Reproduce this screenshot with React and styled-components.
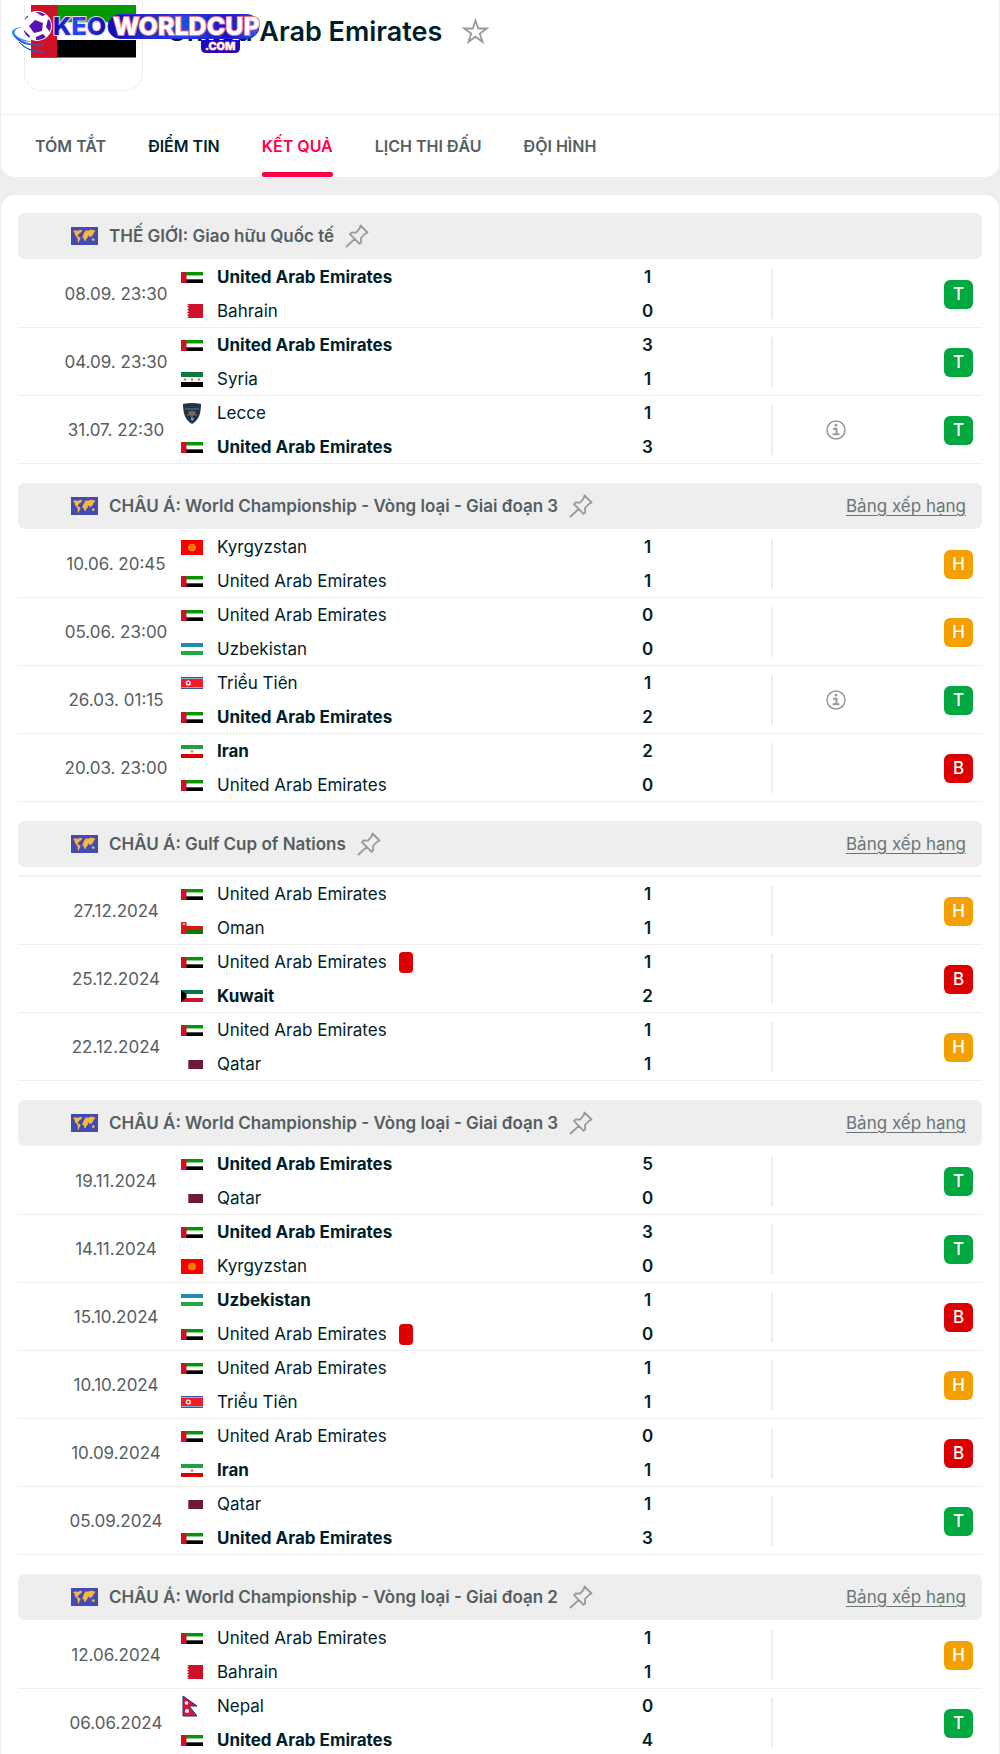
import React from 'react';
import styled, { createGlobalStyle } from 'styled-components';

const GlobalStyle = createGlobalStyle`
  * {
    box-sizing: border-box;
  }

  body {
    margin: 0;
    background-color: #eeeeee;
    color: #001e28;
    font-family: Inter, 'Noto Sans', sans-serif;
    font-size: 17px;
  }
`;

const Page = styled.div`
  position: relative;
  padding: 0 1px;
`;

const HeaderCard = styled.header`
  background-color: white;
  border-radius: 0 0 14px 14px;
`;

const Heading = styled.div`
  display: flex;
  align-items: flex-start;
  height: 115px;
  padding-left: 23px;
  border-bottom: 1px solid #eeeeee;
`;

const LogoBox = styled.div`
  display: flex;
  align-items: flex-start;
  justify-content: center;
  width: 119px;
  height: 91px;
  padding-top: 5px;
  border: 1px solid #eeeeee;
  border-top: none;
  border-radius: 0 0 18px 18px;
`;

const TeamName = styled.h1`
  margin: 15px 0 0 24px;
  font-size: 27px;
  font-weight: 600;
  line-height: 34px;
`;

const IconButton = styled.button`
  display: flex;
  padding: 0;
  border: none;
  background: none;
  color: #999999;
  cursor: pointer;
`;

const StarButton = styled(IconButton)`
  margin: 18px 0 0 20px;
`;

const Tabs = styled.nav`
  display: flex;
  gap: 42px;
  padding-left: 34px;
`;

const Tab = styled.a`
  display: flex;
  flex-direction: column;
  justify-content: space-between;
  height: 62px;
  color: ${props => (props.$active ? '#ff0046' : props.$strong ? '#001e28' : '#555e61')};
  font-size: 16px;
  font-weight: 600;
  line-height: 20px;
  text-decoration: none;
  text-transform: uppercase;

  &::before {
    content: '';
    height: 5px;
  }

  &::after {
    content: '';
    height: 5px;
    background-color: ${props => (props.$active ? '#ff0046' : 'transparent')};
    border-radius: 2px;
  }
`;

const ResultsCard = styled.main`
  display: flex;
  flex-direction: column;
  gap: 19px;
  margin-top: 18px;
  padding: 18px 17px 0;
  background-color: white;
  border-radius: 14px 14px 0 0;
`;

const GroupHeader = styled.div`
  display: flex;
  align-items: center;
  height: 46px;
  margin-bottom: ${props => (props.$spaced ? 8 : 1)}px;
  padding: 0 16px 0 53px;
  background-color: #eeeeee;
  border-radius: 7px;
`;

const GroupTitle = styled.h2`
  margin: 0 11px;
  color: #555e61;
  font-size: 17px;
  font-weight: 600;
`;

const StandingsLink = styled.a`
  margin-left: auto;
  color: #6b7578;
  text-underline-offset: 3px;
`;

const MatchTable = styled.table`
  width: 100%;
  border-collapse: collapse;
  table-layout: fixed;
  border-top: ${props => (props.$ruled ? '2px solid #f2f2f2' : 'none')};
`;

const MatchRow = styled.tr`
  height: 68px;
  box-shadow: inset 0 -1px #eeeeee;
`;

const Cell = styled.td`
  padding: 0;
`;

const DateCell = styled(Cell)`
  width: 163px;
  padding-left: 33px;
  color: #555e61;
  text-align: center;
`;

const ScoreCell = styled(Cell)`
  width: 247px;
  font-weight: 600;
  line-height: 34px;
  text-align: center;
`;

const InfoCell = styled(Cell)`
  width: 130px;
`;

const InfoBox = styled.div`
  display: flex;
  align-items: center;
  justify-content: center;
  height: 50px;
  padding-right: 2px;
  border-left: 2px solid #eeeeee;
`;

const ResultCell = styled(Cell)`
  width: 81px;
  padding-right: 9px;
`;

const TeamLine = styled.div`
  display: flex;
  align-items: center;
  height: 34px;
  font-weight: ${props => (props.$winner ? 700 : 400)};
`;

const FlagSlot = styled.span`
  display: flex;
  width: 22px;
  margin-right: 14px;
`;

const RedCard = styled.span`
  width: 14px;
  height: 21px;
  margin-left: 12px;
  background-color: #dc0000;
  border-radius: 4px;
`;

const badgeColors = { T: '#00a83f', H: '#f3a000', B: '#dc0000' };

const ResultBadge = styled.span`
  display: flex;
  align-items: center;
  justify-content: center;
  width: 29px;
  height: 29px;
  margin-left: auto;
  background-color: ${props => badgeColors[props.$result]};
  border-radius: 6px;
  color: white;
  font-weight: 500;
`;

const Watermark = styled.svg`
  position: absolute;
  top: 8px;
  left: 10px;
`;

const flags = {
  uae: {
    height: 11,
    art: (
      <>
        <rect width="22" height="3.67" fill="#009a00" />
        <rect y="3.67" width="22" height="3.67" fill="#fff" />
        <rect y="7.33" width="22" height="3.67" fill="#000" />
        <rect width="5.5" height="11" fill="#ce1126" />
      </>
    ),
  },
  bahrain: {
    height: 14,
    art: <path d="M22 0H6l2 1.4-2 1.4 2 1.4-2 1.4L8 7 6 8.4l2 1.4-2 1.4 2 1.4L6 14h16z" fill="#ce1126" />,
  },
  syria: {
    height: 15,
    art: (
      <>
        <rect width="22" height="5" fill="#0b7a3c" />
        <rect y="10" width="22" height="5" fill="#000" />
        <circle cx="4" cy="7.5" r="1.2" fill="#dd6673" />
        <circle cx="11" cy="7.5" r="1.2" fill="#dd6673" />
        <circle cx="18" cy="7.5" r="1.2" fill="#dd6673" />
      </>
    ),
  },
  lecce: {
    height: 21,
    art: (
      <>
        <path d="M2 1q9-2 18 0c0 9-2 16-9 20C4 17 2 10 2 1z" fill="#233344" />
        <path d="M4 6h14M6 13l5-4 5 4" fill="none" stroke="#697887" strokeWidth="1" />
        <path d="M8 8h6l1 3-4 3-4-3z" fill="#75665c" />
        <path d="M10 14l3 1-1 3-2-1z" fill="#8795a3" />
      </>
    ),
  },
  kyrgyzstan: {
    height: 15,
    art: (
      <>
        <rect width="22" height="15" fill="#f80000" />
        <circle cx="11" cy="7.5" r="3.8" fill="#ff8a00" />
        <circle cx="11" cy="7.5" r="1.8" fill="none" stroke="#e34b00" strokeWidth="0.7" />
      </>
    ),
  },
  uzbekistan: {
    height: 12,
    art: (
      <>
        <rect width="22" height="4" fill="#1e90ae" />
        <rect y="8" width="22" height="4" fill="#22a843" />
      </>
    ),
  },
  northKorea: {
    height: 12,
    art: (
      <>
        <rect width="22" height="12" fill="#3158a5" />
        <rect y="1.5" width="22" height="9" fill="#fff" />
        <rect y="2" width="22" height="8" fill="#ed1c27" />
        <circle cx="7.3" cy="6" r="2.6" fill="#fff" />
        <circle cx="7.3" cy="6" r="1.2" fill="#ed1c27" />
      </>
    ),
  },
  iran: {
    height: 13,
    art: (
      <>
        <rect width="22" height="4" fill="#239f40" />
        <rect y="9" width="22" height="4" fill="#da0000" />
        <circle cx="11" cy="6.5" r="1.3" fill="#e57373" />
      </>
    ),
  },
  oman: {
    height: 12,
    art: (
      <>
        <rect width="22" height="4" fill="#fff" />
        <rect y="4" width="22" height="4" fill="#db161b" />
        <rect y="8" width="22" height="4" fill="#008000" />
        <rect width="5.5" height="12" fill="#db161b" />
        <path d="M1.5 1L4 3M4 1L1.5 3" stroke="#fff" strokeWidth="0.7" />
      </>
    ),
  },
  kuwait: {
    height: 12,
    art: (
      <>
        <rect width="22" height="4" fill="#007a3d" />
        <rect y="8" width="22" height="4" fill="#ce1126" />
        <path d="M0 0l5.5 4v4L0 12z" fill="#000" />
      </>
    ),
  },
  qatar: {
    height: 9,
    art: <path d="M22 0H7l.6 1L7 2l.6 1L7 4l.6 1L7 6l.6 1L7 8l.6 1H22z" fill="#6f1a3d" />,
  },
  nepal: {
    height: 22,
    art: (
      <>
        <path d="M2 1l14 10H8l8 10H2z" fill="#dc143c" stroke="#1b3388" strokeWidth="1" />
        <circle cx="5.5" cy="8" r="1.8" fill="#fff" />
        <circle cx="6" cy="16" r="2" fill="#fff" />
      </>
    ),
  },
};

const Flag = ({ code, width = 22 }) => {
  const { height, art } = flags[code];
  return (
    <svg width={width} height={(height * width) / 22} viewBox={`0 0 22 ${height}`} aria-hidden="true">
      {art}
    </svg>
  );
};

const WorldFlag = () => (
  <svg width="27" height="18" viewBox="0 0 27 18" aria-hidden="true">
    <rect width="27" height="18" fill="#414bb2" />
    <path
      d="M2 4l3-.8 2 .8 2-1.2L11.500 3.500 10 5.500 8.500 6.200 7.500 7.800 6.500 8.200 7 9.300 9.300 10.500 9.500 12 8.300 13.500 7.700 16 6.800 15 6.600 11.500 5.200 9.300 3.900 8.200 3.700 6zM12.300 7.500L13.500 5l1.500-1.700 2 .4 3-1.300 4.500 1.300-.8 1.500-1.200.5-.3 2L20.800 8.600l.3 1.700-1.300-1.200-1 1.500-1.200-2-1 .3.500 1.400-1.700 1.500-.7 2.200-1.300-.2-.6-2.300-1.600-1zM20.700 12l2-.9 1.200 1.600-1 1.300-1.800-.5z"
      fill="#f5b642"
    />
  </svg>
);

const Pin = () => (
  <svg width="24" height="24" viewBox="0 0 24 24" fill="none" stroke="currentColor" strokeWidth="1.8" strokeLinejoin="round" aria-hidden="true">
    <path d="M15.500 1.500l7 7-2.700 1.500-3.800 4 .2 4.200-1.600 1.600L5 10.200l1.600-1.700 4.400.2 3.500-4zM9.800 14.800L1 23" />
  </svg>
);

const Star = () => (
  <svg width="27" height="27" viewBox="0 0 27 27" fill="none" stroke="currentColor" strokeWidth="1.8" aria-hidden="true">
    <path d="M13.500 2.500l2.700 8h8.600l-7 5 2.700 8.300-7-5.100-7 5.100 2.700-8.300-7-5h8.600z" />
  </svg>
);

const Info = () => (
  <svg width="20" height="20" viewBox="0 0 20 20" fill="none" stroke="#999999" role="img" aria-label="Info">
    <circle cx="10" cy="10" r="9" strokeWidth="1.500" />
    <path d="M7 8.700h3.500V14M6.600 14.200h6.800" strokeWidth="2" />
    <circle cx="10" cy="5.200" r="1.400" fill="#999999" stroke="none" />
  </svg>
);

const SiteLogo = () => (
  <Watermark width="252" height="48" viewBox="0 0 252 48" role="img" aria-label="KEO WORLDCUP .COM">
    <defs>
      <linearGradient id="pill" x1="0" x2="1">
        <stop offset="0" stopColor="#1607b8" />
        <stop offset="0.500" stopColor="#1c4be8" />
        <stop offset="0.800" stopColor="#1a12c4" />
        <stop offset="1" stopColor="#2a62f0" />
      </linearGradient>
      <linearGradient id="keo" x1="0" x2="1">
        <stop offset="0" stopColor="#1305b4" />
        <stop offset="0.500" stopColor="#2450ee" />
        <stop offset="1" stopColor="#1305b4" />
      </linearGradient>
      <clipPath id="ball">
        <circle cx="27" cy="18" r="14" />
      </clipPath>
    </defs>
    <path d="M13 19C1 21 0 29 22 34 7 33-1 27 3 22q3-3 10-3z" fill="#2f8df0" />
    <path d="M4 28c6 8 16 10 30 9-11 1-22-2-30-9zM9 34c6 7 14 9 25 10-10 1-18-3-25-10z" fill="#2459d8" stroke="#2459d8" />
    <circle cx="27" cy="18" r="15" fill="#fff" />
    <g clipPath="url(#ball)" fill="#5712b8">
      <path d="M25 12l8 3-1 8-8 2-5-7z" />
      <path d="M11 15l7-6-2-6-8 5zM24 3l8 5 7-2-4-5zM38 11l-2 8 4 5 5-7zM14 22l6 6-2 5-8-6zM26 29l7-3 3 3-5 5h-5z" />
    </g>
    <rect x="98" y="6.500" width="151" height="24" rx="12" fill="url(#pill)" stroke="#2828d8" />
    <path d="M191 32h39v8q0 5-5 5h-29q-5 0-5-5z" fill="#1b09c7" />
    <g fontFamily="Inter, sans-serif" paintOrder="stroke" strokeLinejoin="round">
      <text x="43" y="27" fontSize="25" fontWeight="800" fill="url(#keo)" stroke="#f6d9e6" strokeWidth="2">KEO</text>
      <text x="103" y="27" fontSize="25" fontWeight="800" fill="#fff" stroke="#e8707c" strokeWidth="2">WORLDCUP</text>
      <text x="195" y="42" fontSize="11" fontWeight="800" fill="#fff" stroke="#e8707c" strokeWidth="1">.COM</text>
    </g>
  </Watermark>
);

const UAE = ['United Arab Emirates', 'uae'];
const BAHRAIN = ['Bahrain', 'bahrain'];
const SYRIA = ['Syria', 'syria'];
const LECCE = ['Lecce', 'lecce'];
const KYRGYZSTAN = ['Kyrgyzstan', 'kyrgyzstan'];
const UZBEKISTAN = ['Uzbekistan', 'uzbekistan'];
const NORTH_KOREA = ['Triều Tiên', 'northKorea'];
const IRAN = ['Iran', 'iran'];
const OMAN = ['Oman', 'oman'];
const KUWAIT = ['Kuwait', 'kuwait'];
const QATAR = ['Qatar', 'qatar'];
const NEPAL = ['Nepal', 'nepal'];

const groups = [
  {
    title: 'THẾ GIỚI: Giao hữu Quốc tế',
    matches: [
      { date: '08.09. 23:30', teams: [UAE, BAHRAIN], score: [1, 0], result: 'T' },
      { date: '04.09. 23:30', teams: [UAE, SYRIA], score: [3, 1], result: 'T' },
      { date: '31.07. 22:30', teams: [LECCE, UAE], score: [1, 3], result: 'T', info: true },
    ],
  },
  {
    title: 'CHÂU Á: World Championship - Vòng loại - Giai đoạn 3',
    standings: true,
    matches: [
      { date: '10.06. 20:45', teams: [KYRGYZSTAN, UAE], score: [1, 1], result: 'H' },
      { date: '05.06. 23:00', teams: [UAE, UZBEKISTAN], score: [0, 0], result: 'H' },
      { date: '26.03. 01:15', teams: [NORTH_KOREA, UAE], score: [1, 2], result: 'T', info: true },
      { date: '20.03. 23:00', teams: [IRAN, UAE], score: [2, 0], result: 'B' },
    ],
  },
  {
    title: 'CHÂU Á: Gulf Cup of Nations',
    standings: true,
    ruled: true,
    matches: [
      { date: '27.12.2024', teams: [UAE, OMAN], score: [1, 1], result: 'H' },
      { date: '25.12.2024', teams: [UAE, KUWAIT], score: [1, 2], result: 'B', redCard: 0 },
      { date: '22.12.2024', teams: [UAE, QATAR], score: [1, 1], result: 'H' },
    ],
  },
  {
    title: 'CHÂU Á: World Championship - Vòng loại - Giai đoạn 3',
    standings: true,
    matches: [
      { date: '19.11.2024', teams: [UAE, QATAR], score: [5, 0], result: 'T' },
      { date: '14.11.2024', teams: [UAE, KYRGYZSTAN], score: [3, 0], result: 'T' },
      { date: '15.10.2024', teams: [UZBEKISTAN, UAE], score: [1, 0], result: 'B', redCard: 1 },
      { date: '10.10.2024', teams: [UAE, NORTH_KOREA], score: [1, 1], result: 'H' },
      { date: '10.09.2024', teams: [UAE, IRAN], score: [0, 1], result: 'B' },
      { date: '05.09.2024', teams: [QATAR, UAE], score: [1, 3], result: 'T' },
    ],
  },
  {
    title: 'CHÂU Á: World Championship - Vòng loại - Giai đoạn 2',
    standings: true,
    matches: [
      { date: '12.06.2024', teams: [UAE, BAHRAIN], score: [1, 1], result: 'H' },
      { date: '06.06.2024', teams: [NEPAL, UAE], score: [0, 4], result: 'T' },
    ],
  },
];

const Match = ({ match }) => (
  <MatchRow>
    <DateCell>{match.date}</DateCell>
    <Cell>
      {match.teams.map(([name, code], i) => (
        <TeamLine key={name} $winner={match.score[i] > match.score[1 - i]}>
          <FlagSlot>
            <Flag code={code} />
          </FlagSlot>
          {name}
          {match.redCard === i && <RedCard />}
        </TeamLine>
      ))}
    </Cell>
    <ScoreCell>
      {match.score.map((goals, i) => (
        <div key={i}>{goals}</div>
      ))}
    </ScoreCell>
    <InfoCell>
      <InfoBox>{match.info && <Info />}</InfoBox>
    </InfoCell>
    <ResultCell>
      <ResultBadge $result={match.result}>{match.result}</ResultBadge>
    </ResultCell>
  </MatchRow>
);

const Group = ({ group }) => (
  <section>
    <GroupHeader $spaced={group.ruled}>
      <WorldFlag />
      <GroupTitle>{group.title}</GroupTitle>
      <IconButton type="button" aria-label="Pin">
        <Pin />
      </IconButton>
      {group.standings && <StandingsLink href="#standings">Bảng xếp hạng</StandingsLink>}
    </GroupHeader>
    <MatchTable $ruled={group.ruled}>
      <tbody>
        {group.matches.map(match => (
          <Match key={match.date} match={match} />
        ))}
      </tbody>
    </MatchTable>
  </section>
);

const App = () => (
  <>
    <GlobalStyle />
    <Page>
      <HeaderCard>
        <Heading>
          <LogoBox>
            <Flag code="uae" width={105} />
          </LogoBox>
          <TeamName>United Arab Emirates</TeamName>
          <StarButton type="button" aria-label="Favourite">
            <Star />
          </StarButton>
        </Heading>
        <Tabs>
          <Tab href="#summary">Tóm tắt</Tab>
          <Tab href="#news" $strong>Điểm tin</Tab>
          <Tab href="#results" $active>Kết quả</Tab>
          <Tab href="#fixtures">Lịch thi đấu</Tab>
          <Tab href="#squad">Đội hình</Tab>
        </Tabs>
      </HeaderCard>
      <ResultsCard>
        {groups.map((group, i) => (
          <Group key={i} group={group} />
        ))}
      </ResultsCard>
      <SiteLogo />
    </Page>
  </>
);

export default App;
